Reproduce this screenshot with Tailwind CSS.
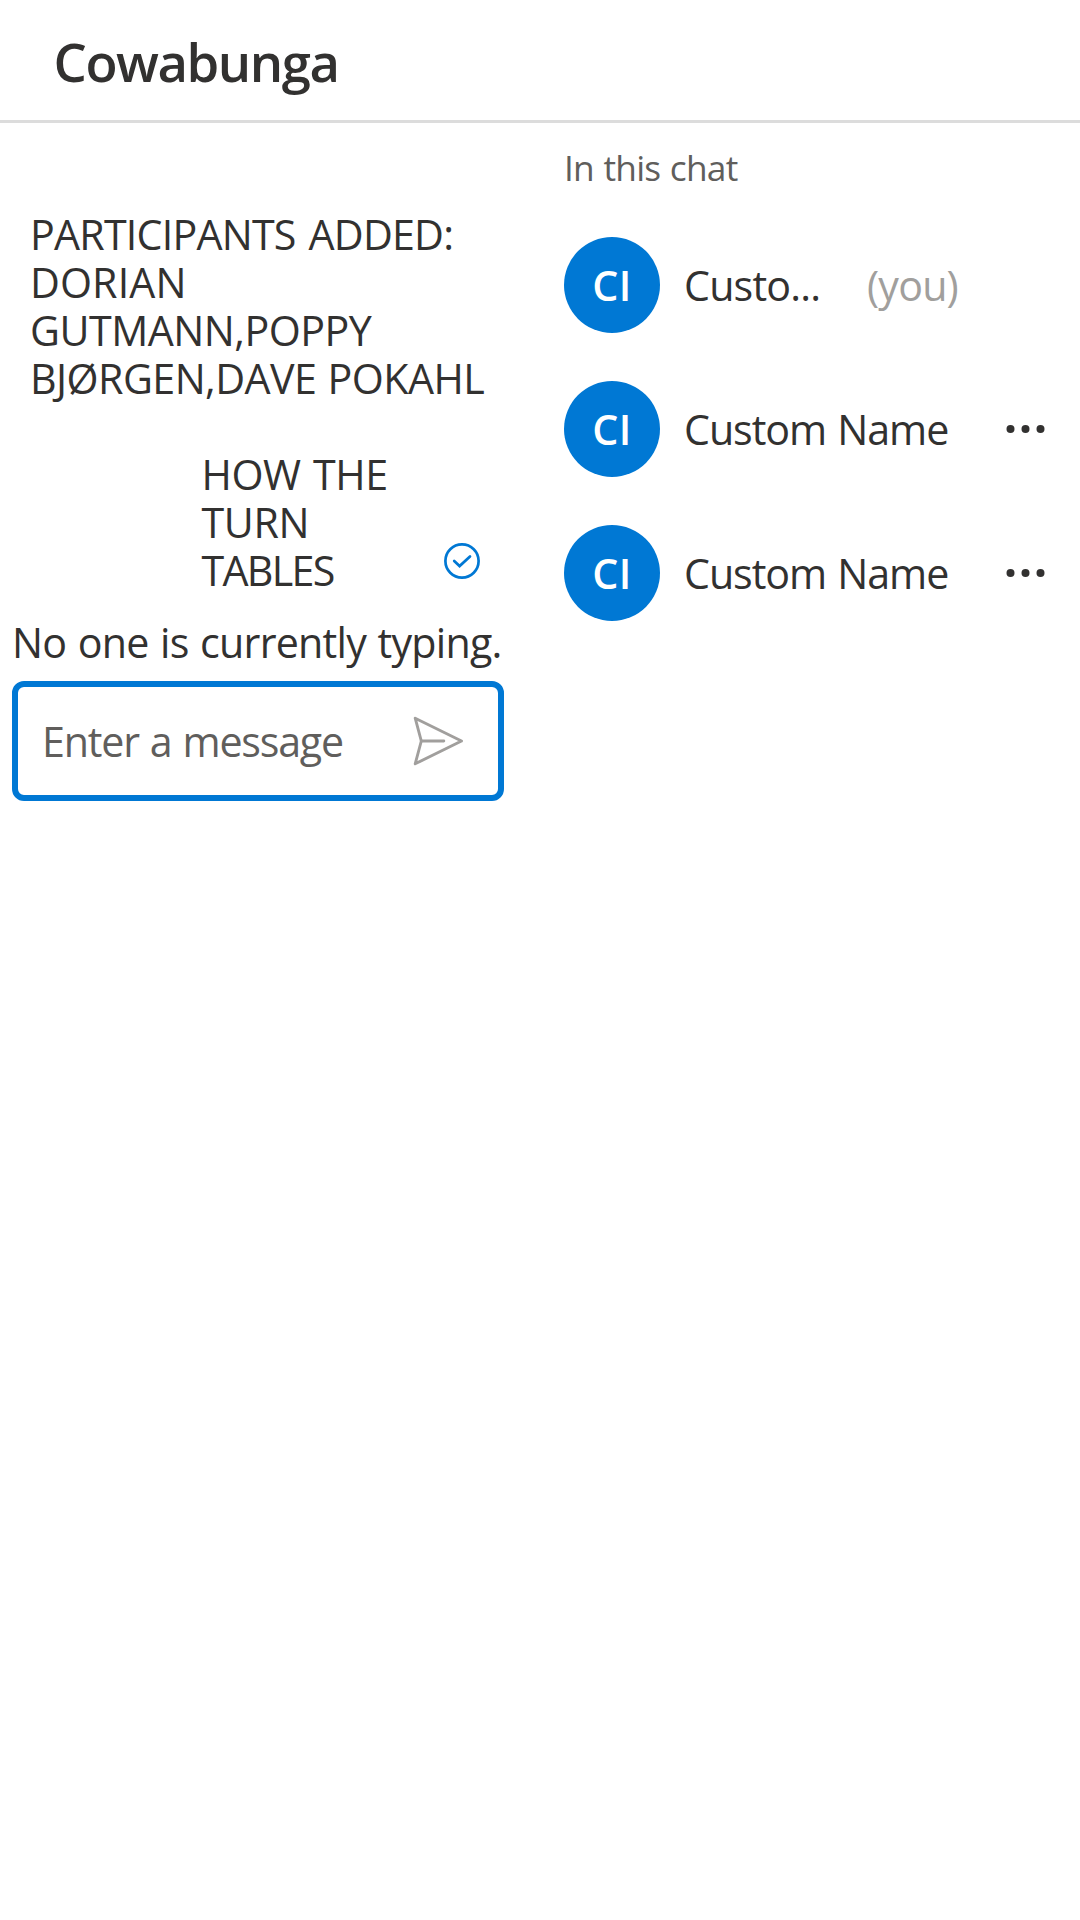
<!DOCTYPE html>
<html lang="en">
<head>
<meta charset="utf-8">
<title>Cowabunga</title>
<script src="https://cdn.jsdelivr.net/npm/@tailwindcss/browser@4"></script>
</head>
<body class="h-[1920px] w-[1080px] overflow-hidden bg-white font-['Open_Sans',sans-serif] text-[41.2px] leading-[48px] text-[#323130]">
<header class="flex h-[123px] items-center border-b-3 border-[#dcdcdc] pl-[53.5px]">
  <h1 class="pt-[3px] text-[52.6px] leading-[72px] font-[580] tracking-[-1.45px]">Cowabunga</h1>
</header>
<main class="flex">
  <section class="flex w-[564px] flex-col pt-[87px] pl-3">
    <p class="flex flex-col items-start pl-[18px] whitespace-nowrap">
      <span class="tracking-[-0.78px] [word-spacing:3px]">PARTICIPANTS ADDED:</span>
      <span class="tracking-[0.1px]">DORIAN</span>
      <span class="tracking-[-0.5px]">GUTMANN,POPPY</span>
      <span class="tracking-[-0.55px] [word-spacing:1px]">BJØRGEN,DAVE POKAHL</span>
    </p>
    <div class="mt-12 flex w-[468px] items-end justify-between pl-[189.5px] whitespace-nowrap">
      <p class="flex flex-col items-start">
        <span class="tracking-[-0.4px] [word-spacing:2px]">HOW THE</span>
        <span class="tracking-[-0.4px]">TURN</span>
        <span class="tracking-[-1.7px]">TABLES</span>
      </p>
      <svg class="mb-[15px] h-9 w-9" viewBox="0 0 36 36" fill="none" stroke="#0078d4" stroke-width="2.7">
        <circle cx="18" cy="18" r="16.6"/>
        <path d="M10.2 18l5.4 5.1L26 13.4" stroke-linecap="round" stroke-linejoin="miter"/>
      </svg>
    </div>
    <p class="mt-6 tracking-[-0.75px] whitespace-nowrap [word-spacing:1.5px]">No one is currently typing.</p>
    <div class="mt-[15px] flex h-[120px] w-[492px] items-center rounded-[12px] border-6 border-[#0078d4] pr-[34px] pl-6">
      <span class="flex-1 tracking-[-1.2px] whitespace-nowrap text-[#605e5c] [word-spacing:1.5px]">Enter a message</span>
      <svg class="h-[52px] w-[52px]" viewBox="0 0 52 52" fill="none" stroke="#a19f9d" stroke-width="2.9" stroke-linejoin="round" stroke-linecap="round">
        <path d="M3.2 3.2L49.5 26 3.2 48.8 9.3 26z"/>
        <path d="M9.3 26h22.5"/>
      </svg>
    </div>
  </section>
  <section class="flex flex-1 flex-col pt-[20px]">
    <h2 class="text-[35.3px] tracking-[-0.75px] text-[#605e5c] [word-spacing:1px]">In this chat</h2>
    <ul class="mt-[22px]">
      <li class="flex h-36 items-center">
        <span class="flex size-24 items-center justify-center rounded-full bg-[#0078d4] font-[560] tracking-[0.5px] text-white">CI</span>
        <span class="ml-6 w-[183px] tracking-[-0.8px]">Custo...</span>
        <span class="tracking-[-0.8px] text-[#a19f9d]">(you)</span>
      </li>
      <li class="flex h-36 items-center">
        <span class="flex size-24 items-center justify-center rounded-full bg-[#0078d4] font-[560] tracking-[0.5px] text-white">CI</span>
        <span class="ml-6 w-[322px] tracking-[-1.05px] [word-spacing:1.5px]">Custom Name</span>
        <svg class="h-2 w-10" viewBox="0 0 40 8" fill="#323130"><circle cx="4.5" cy="4" r="4"/><circle cx="19.5" cy="4" r="4"/><circle cx="34.5" cy="4" r="4"/></svg>
      </li>
      <li class="flex h-36 items-center">
        <span class="flex size-24 items-center justify-center rounded-full bg-[#0078d4] font-[560] tracking-[0.5px] text-white">CI</span>
        <span class="ml-6 w-[322px] tracking-[-1.05px] [word-spacing:1.5px]">Custom Name</span>
        <svg class="h-2 w-10" viewBox="0 0 40 8" fill="#323130"><circle cx="4.5" cy="4" r="4"/><circle cx="19.5" cy="4" r="4"/><circle cx="34.5" cy="4" r="4"/></svg>
      </li>
    </ul>
  </section>
</main>
</body>
</html>
